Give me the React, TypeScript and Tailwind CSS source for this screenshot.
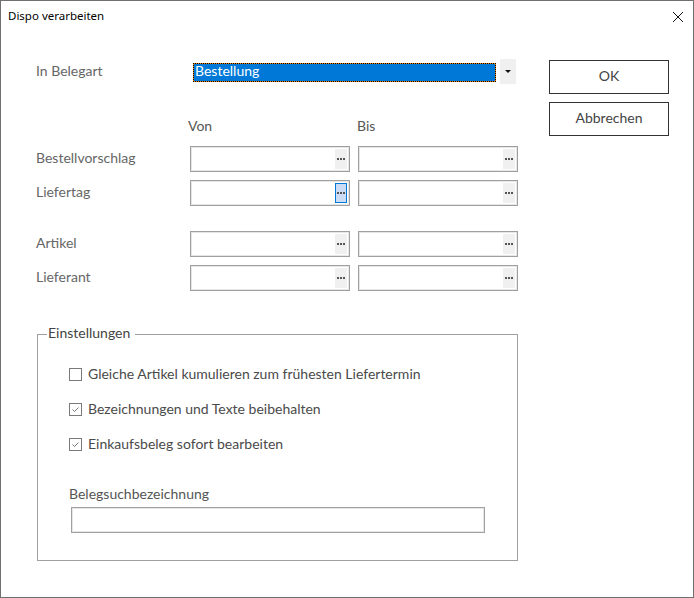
import React from "react";

const font = { fontFamily: "Lato, 'Noto Sans', sans-serif" };

function Dots() {
  return (
    <span className="flex gap-[1px]">
      <span className="w-[2px] h-[2px] bg-[#555]" />
      <span className="w-[2px] h-[2px] bg-[#555]" />
      <span className="w-[2px] h-[2px] bg-[#555]" />
    </span>
  );
}

function Field({ focused = false }: { focused?: boolean }) {
  return (
    <div className="w-[160px] h-[26px] border border-[#a0a0a0] bg-white shadow-[inset_0_0_0_1px_#e6e6e6] flex justify-end p-[2px]">
      {focused ? (
        <div className="w-[12px] h-[20px] border border-[#0078d7] bg-[#cddcf5] flex items-center justify-center">
          <Dots />
        </div>
      ) : (
        <div className="w-[12px] h-[20px] bg-[#f0f0f0] flex items-center justify-center">
          <Dots />
        </div>
      )}
    </div>
  );
}

function Row({ label, focused = false }: { label: string; focused?: boolean }) {
  return (
    <div className="flex items-center h-[26px]">
      <div className="w-[154px] text-[14px] text-[#666] pb-[4px]">{label}</div>
      <div className="flex gap-[8px]">
        <Field focused={focused} />
        <Field />
      </div>
    </div>
  );
}

function Check({ checked, label }: { checked: boolean; label: string }) {
  return (
    <div className="flex items-center h-[20px] gap-[6px]">
      <div className="w-[13px] h-[13px] border border-[#7a7a7a] bg-white flex items-center justify-center">
        {checked && (
          <svg width="9" height="9" viewBox="0 0 9 9">
            <path d="M1.5 4.5 L3.5 6.5 L7.5 2.5" fill="none" stroke="#777" strokeWidth="1" />
          </svg>
        )}
      </div>
      <span className="text-[14px] text-[#4a4a4a] pb-[2px]">{label}</span>
    </div>
  );
}

export default function App() {
  return (
    <div
      className="w-[694px] h-[598px] border border-[#707070] bg-white flex flex-col overflow-hidden"
      style={font}
    >
      <div className="h-[31px] flex items-center justify-between pl-[7px] pr-[9px] shrink-0">
        <span className="text-[11.5px] text-black pb-[2px]" style={{ fontFamily: "'Noto Sans', sans-serif" }}>
          Dispo verarbeiten
        </span>
        <svg width="12" height="12" viewBox="0 0 12 12">
          <path d="M1 1 L11 11 M11 1 L1 11" stroke="#111" strokeWidth="1" />
        </svg>
      </div>
      <div className="flex">
        <div className="w-[517px] pl-[35px] flex flex-col">
          <div className="flex items-center h-[26px] mt-[27px]">
            <div className="w-[154px] text-[14px] text-[#666] pb-[4px]">In Belegart</div>
            <div className="w-[327px] h-[26px] flex items-start">
              <div className="ml-[3px] mt-[4px] w-[303px] h-[19px] bg-[#f08000] border border-dotted border-black">
                <div className="w-full h-full bg-[#0078d7] text-white text-[14px] leading-[14px] pl-[1px]">
                  Bestellung
                </div>
              </div>
              <div className="ml-[4px] w-[16px] h-[25px] bg-[#f0f0f0] flex items-center justify-center">
                <svg width="6" height="4" viewBox="0 0 6 4">
                  <path d="M0 0 L6 0 L3 3 Z" fill="#111" />
                </svg>
              </div>
            </div>
          </div>
          <div className="flex h-[20px] items-center mt-[32px] text-[14px] text-[#555] pb-[4px]">
            <div className="ml-[152px] w-[169px]">Von</div>
            <div>Bis</div>
          </div>
          <div className="mt-[9px]">
            <Row label="Bestellvorschlag" />
          </div>
          <div className="mt-[8px]">
            <Row label="Liefertag" focused />
          </div>
          <div className="mt-[25px]">
            <Row label="Artikel" />
          </div>
          <div className="mt-[8px]">
            <Row label="Lieferant" />
          </div>
          <fieldset className="mt-[34px] ml-[1px] w-[481px] h-[236px] border border-[#a0a0a0] px-0 pb-0 m-0">
            <legend className="ml-[9px] pl-[1px] pr-[5px] text-[14px] leading-[16px] pb-[3px] text-[#444]">
              Einstellungen
            </legend>
            <div className="pl-[31px] pt-[20px] flex flex-col gap-[15px]">
              <Check checked={false} label="Gleiche Artikel kumulieren zum frühesten Liefertermin" />
              <Check checked label="Bezeichnungen und Texte beibehalten" />
              <Check checked label="Einkaufsbeleg sofort bearbeiten" />
            </div>
            <div className="pl-[31px] mt-[30px] text-[14px] text-[#555] leading-[20px] pb-[2px]">Belegsuchbezeichnung</div>
            <div className="ml-[33px] mt-[1px] w-[414px] h-[26px] border border-[#a0a0a0] shadow-[inset_0_0_0_1px_#e6e6e6] bg-white" />
          </fieldset>
        </div>
        <div className="ml-[31px] mt-[28px] flex flex-col gap-[8px]">
          <div className="w-[120px] h-[34px] border border-[#333] flex items-center justify-center text-[14px] text-[#444] pb-[4px]">
            OK
          </div>
          <div className="w-[120px] h-[34px] border border-[#333] flex items-center justify-center text-[14px] text-[#444] pb-[4px]">
            Abbrechen
          </div>
        </div>
      </div>
    </div>
  );
}
